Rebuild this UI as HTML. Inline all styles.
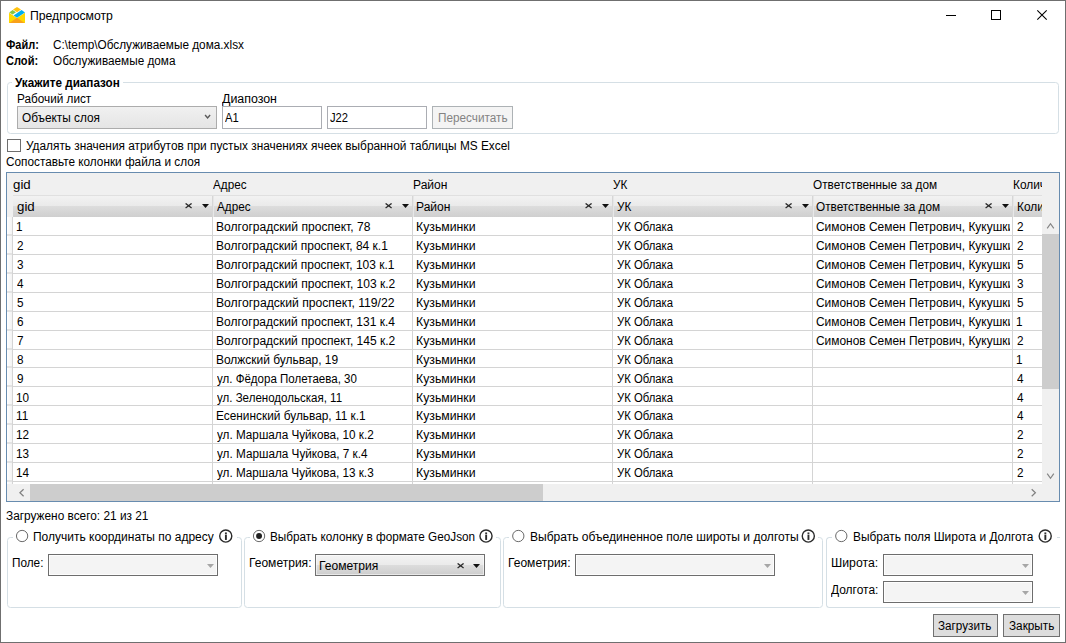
<!DOCTYPE html>
<html lang="ru"><head><meta charset="utf-8"><title>Предпросмотр</title>
<style>
html,body{margin:0;padding:0}
body{width:1066px;height:643px;position:relative;overflow:hidden;background:#fff;font-family:"Liberation Sans",sans-serif;font-size:12px;color:#000}
.a{position:absolute}
.t{position:absolute;white-space:pre;line-height:16px;height:16px;transform-origin:0 0}
.b{font-weight:bold}
.gb{position:absolute;border:1px solid #d5dfe5;border-radius:3.5px;box-sizing:border-box}
.lg{position:absolute;background:#fff;height:3px}
.cmbd{position:absolute;box-sizing:border-box;border:1px solid #6d6d6d;background:#f4f4f4;box-shadow:inset 0 0 0 1px #fdfdfd}
.cmbh{position:absolute;box-sizing:border-box;background:linear-gradient(#f2f2f2 0,#eaeaea 10px,#dddddd 10px,#cfcfcf 100%)}
.btn{position:absolute;box-sizing:border-box;border:1px solid #707070;background:#dddddd}
.hl{position:absolute;height:1px;background:#d4d4d4}
.vl{position:absolute;width:1px;background:#d4d4d4}
</style></head>
<body>
<div class="a" style="left:0;top:0;width:1066px;height:643px;box-sizing:border-box;border:1px solid #6f6f6f;border-right:none;border-bottom:none"></div>
<div class="a" style="left:1065px;top:0;width:1px;height:643px;background:#6f6f6f"></div>
<div class="a" style="left:0;top:642px;width:1066px;height:1px;background:#6f6f6f"></div>
<svg class="a" style="left:9px;top:7px" width="16" height="16" viewBox="0 0 16 16">
<path d="M0 5.8 L8 11 L16 5.8 L16 16 L0 16 Z" fill="#ffd800"/>
<path d="M0.3 16 L8 10.8 L15.7 16 Z" fill="#f9a11b"/>
<path d="M8 0 L12 2.6 L8 5.2 L4 2.6 Z" fill="#ffc20e"/>
<path d="M3.6 2.9 L7 5.2 L3.6 7.6 L0.2 5.4 Z" fill="#8cc63f"/>
<path d="M12.6 2.9 L16 5.4 L8 10.8 L4.6 8.4 Z" fill="#00aeef"/>
</svg>
<svg class="a" style="left:940px;top:5px" width="115" height="20" viewBox="940 5 115 20" shape-rendering="crispEdges">
<rect x="946" y="15" width="10" height="1" fill="#000"/>
<rect x="991.5" y="10.5" width="9" height="9" fill="none" stroke="#000" stroke-width="1"/>
<g shape-rendering="auto"><path d="M1037.3 10.3 L1046.7 19.7 M1046.7 10.3 L1037.3 19.7" stroke="#000" stroke-width="1.1" fill="none"/></g>
</svg>
<div class="gb" style="left:7px;top:82px;width:1052px;height:52px"></div>
<div class="lg" style="left:12px;top:81px;width:111px"></div>
<div class="a" style="left:17px;top:106px;width:200px;height:23px;box-sizing:border-box;border:1px solid #acacac;background:linear-gradient(#f0f0f0,#e5e5e5)"></div>
<svg class="a" style="left:203px;top:113px" width="9" height="8" viewBox="0 0 9 8"><path d="M2.1 2 L4.6 5 L7.1 2" stroke="#5a5a5a" stroke-width="1.4" fill="none"/></svg>
<div class="a" style="left:222px;top:106px;width:100px;height:23px;box-sizing:border-box;border:1px solid #abadb3;background:#fff"></div>
<div class="a" style="left:327px;top:106px;width:100px;height:23px;box-sizing:border-box;border:1px solid #abadb3;background:#fff"></div>
<div class="a" style="left:432px;top:106px;width:81px;height:23px;box-sizing:border-box;border:1px solid #adb2b5;background:#f4f4f4"></div>
<div class="a" style="left:7px;top:139px;width:14px;height:13px;box-sizing:border-box;border:1px solid #6e6e6e;background:#fff"></div>
<div class="a" style="left:6px;top:172px;width:1054px;height:330px;box-sizing:border-box;border:1px solid #688caf;background:#fff"></div>
<div class="a" style="left:7px;top:173px;width:1035px;height:44px;background:#f0f0f0"></div>
<div class="a" style="left:1042px;top:173px;width:17px;height:328px;background:#f0f0f0"></div>
<div class="a" style="left:7px;top:173px;width:1035px;height:311px;overflow:hidden">
<div class="a" style="left:0;top:44px;width:1035px;height:300px;background:#fff"></div>
<div class="cmbh" style="left:6px;top:23px;width:199px;height:21px"></div>
<div class="a" style="left:205px;top:22px;width:2px;height:22px;background:linear-gradient(90deg,#d6d6d6 50%,#e6e6e6 50%)"></div>
<svg class="a" style="left:178px;top:30px" width="8" height="6" viewBox="0 0 8 6"><path d="M0.6 0.4 L6.6 5 M6.6 0.4 L0.6 5" stroke="#2a2a2a" stroke-width="1.25"/></svg>
<svg class="a" style="left:195px;top:31px" width="7" height="4" viewBox="0 0 7 4"><path d="M0 0 L7 0 L3.5 4 Z" fill="#111"/></svg>
<div class="cmbh" style="left:207px;top:23px;width:198px;height:21px"></div>
<div class="a" style="left:405px;top:22px;width:2px;height:22px;background:linear-gradient(90deg,#d6d6d6 50%,#e6e6e6 50%)"></div>
<svg class="a" style="left:378px;top:30px" width="8" height="6" viewBox="0 0 8 6"><path d="M0.6 0.4 L6.6 5 M6.6 0.4 L0.6 5" stroke="#2a2a2a" stroke-width="1.25"/></svg>
<svg class="a" style="left:395px;top:31px" width="7" height="4" viewBox="0 0 7 4"><path d="M0 0 L7 0 L3.5 4 Z" fill="#111"/></svg>
<div class="cmbh" style="left:407px;top:23px;width:198px;height:21px"></div>
<div class="a" style="left:605px;top:22px;width:2px;height:22px;background:linear-gradient(90deg,#d6d6d6 50%,#e6e6e6 50%)"></div>
<svg class="a" style="left:578px;top:30px" width="8" height="6" viewBox="0 0 8 6"><path d="M0.6 0.4 L6.6 5 M6.6 0.4 L0.6 5" stroke="#2a2a2a" stroke-width="1.25"/></svg>
<svg class="a" style="left:595px;top:31px" width="7" height="4" viewBox="0 0 7 4"><path d="M0 0 L7 0 L3.5 4 Z" fill="#111"/></svg>
<div class="cmbh" style="left:607px;top:23px;width:198px;height:21px"></div>
<div class="a" style="left:805px;top:22px;width:2px;height:22px;background:linear-gradient(90deg,#d6d6d6 50%,#e6e6e6 50%)"></div>
<svg class="a" style="left:778px;top:30px" width="8" height="6" viewBox="0 0 8 6"><path d="M0.6 0.4 L6.6 5 M6.6 0.4 L0.6 5" stroke="#2a2a2a" stroke-width="1.25"/></svg>
<svg class="a" style="left:795px;top:31px" width="7" height="4" viewBox="0 0 7 4"><path d="M0 0 L7 0 L3.5 4 Z" fill="#111"/></svg>
<div class="cmbh" style="left:807px;top:23px;width:198px;height:21px"></div>
<div class="a" style="left:1005px;top:22px;width:2px;height:22px;background:linear-gradient(90deg,#d6d6d6 50%,#e6e6e6 50%)"></div>
<svg class="a" style="left:978px;top:30px" width="8" height="6" viewBox="0 0 8 6"><path d="M0.6 0.4 L6.6 5 M6.6 0.4 L0.6 5" stroke="#2a2a2a" stroke-width="1.25"/></svg>
<svg class="a" style="left:995px;top:31px" width="7" height="4" viewBox="0 0 7 4"><path d="M0 0 L7 0 L3.5 4 Z" fill="#111"/></svg>
<div class="cmbh" style="left:1007px;top:23px;width:198px;height:21px"></div>
<div class="a" style="left:1205px;top:22px;width:2px;height:22px;background:linear-gradient(90deg,#d6d6d6 50%,#e6e6e6 50%)"></div>
<svg class="a" style="left:1178px;top:30px" width="8" height="6" viewBox="0 0 8 6"><path d="M0.6 0.4 L6.6 5 M6.6 0.4 L0.6 5" stroke="#2a2a2a" stroke-width="1.25"/></svg>
<svg class="a" style="left:1195px;top:31px" width="7" height="4" viewBox="0 0 7 4"><path d="M0 0 L7 0 L3.5 4 Z" fill="#111"/></svg>
<div class="a" style="left:6px;top:22px;width:1029px;height:1px;background:#e0e0e0"></div>
<div class="hl" style="left:0;top:62px;width:1035px"></div>
<div class="hl" style="left:0;top:81px;width:1035px"></div>
<div class="hl" style="left:0;top:100px;width:1035px"></div>
<div class="hl" style="left:0;top:119px;width:1035px"></div>
<div class="hl" style="left:0;top:138px;width:1035px"></div>
<div class="hl" style="left:0;top:157px;width:1035px"></div>
<div class="hl" style="left:0;top:176px;width:1035px"></div>
<div class="hl" style="left:0;top:194px;width:1035px"></div>
<div class="hl" style="left:0;top:213px;width:1035px"></div>
<div class="hl" style="left:0;top:232px;width:1035px"></div>
<div class="hl" style="left:0;top:251px;width:1035px"></div>
<div class="hl" style="left:0;top:270px;width:1035px"></div>
<div class="hl" style="left:0;top:289px;width:1035px"></div>
<div class="hl" style="left:0;top:308px;width:1035px"></div>
<div class="a" style="left:0;top:44px;width:5px;height:300px;background:linear-gradient(90deg,#fff 0,#f3f3f3 100%)"></div>
<div class="a" style="left:0;top:61px;width:5px;height:2px;background:#e3e3e3"></div>
<div class="a" style="left:0;top:80px;width:5px;height:2px;background:#e3e3e3"></div>
<div class="a" style="left:0;top:99px;width:5px;height:2px;background:#e3e3e3"></div>
<div class="a" style="left:0;top:118px;width:5px;height:2px;background:#e3e3e3"></div>
<div class="a" style="left:0;top:137px;width:5px;height:2px;background:#e3e3e3"></div>
<div class="a" style="left:0;top:156px;width:5px;height:2px;background:#e3e3e3"></div>
<div class="a" style="left:0;top:175px;width:5px;height:2px;background:#e3e3e3"></div>
<div class="a" style="left:0;top:193px;width:5px;height:2px;background:#e3e3e3"></div>
<div class="a" style="left:0;top:212px;width:5px;height:2px;background:#e3e3e3"></div>
<div class="a" style="left:0;top:231px;width:5px;height:2px;background:#e3e3e3"></div>
<div class="a" style="left:0;top:250px;width:5px;height:2px;background:#e3e3e3"></div>
<div class="a" style="left:0;top:269px;width:5px;height:2px;background:#e3e3e3"></div>
<div class="a" style="left:0;top:288px;width:5px;height:2px;background:#e3e3e3"></div>
<div class="a" style="left:0;top:307px;width:5px;height:2px;background:#e3e3e3"></div>
<div class="vl" style="left:5px;top:44px;height:300px"></div>
<div class="vl" style="left:205px;top:44px;height:300px"></div>
<div class="vl" style="left:405px;top:44px;height:300px"></div>
<div class="vl" style="left:605px;top:44px;height:300px"></div>
<div class="vl" style="left:805px;top:44px;height:300px"></div>
<div class="vl" style="left:1005px;top:44px;height:300px"></div>
<span class="t" style="left:6.04px;top:4.00px;transform:scaleX(1.1060)">gid</span>
<span class="t" style="left:9.74px;top:26.00px;transform:scaleX(1.1060)">gid</span>
<span class="t" style="left:206.38px;top:4.00px;transform:scaleX(0.9759)">Адрес</span>
<span class="t" style="left:210.08px;top:26.00px;transform:scaleX(0.9759)">Адрес</span>
<span class="t" style="left:405.61px;top:4.00px;transform:scaleX(1.0037)">Район</span>
<span class="t" style="left:409.31px;top:26.00px;transform:scaleX(1.0037)">Район</span>
<span class="t" style="left:606.09px;top:4.00px;transform:scaleX(0.9770)">УК</span>
<span class="t" style="left:609.79px;top:26.00px;transform:scaleX(0.9770)">УК</span>
<span class="t" style="left:805.64px;top:4.00px;transform:scaleX(0.9819)">Ответственные за дом</span>
<span class="t" style="left:809.34px;top:26.00px;transform:scaleX(0.9819)">Ответственные за дом</span>
<span class="t" style="left:1005.83px;top:4.00px;transform:scaleX(0.9884)">Количество</span>
<span class="t" style="left:1009.53px;top:26.00px;transform:scaleX(0.9884)">Количество</span>
<span class="t" style="left:9.41px;top:46.40px;transform:scaleX(0.9770)">1</span>
<span class="t" style="left:208.91px;top:46.40px;transform:scaleX(1.0059)">Волгоградский проспект, 78</span>
<span class="t" style="left:409.29px;top:46.40px;transform:scaleX(1.0219)">Кузьминки</span>
<span class="t" style="left:609.80px;top:46.40px;transform:scaleX(0.9415)">УК Облака</span>
<span class="t" style="left:808.69px;top:46.40px;transform:scaleX(0.9944);width:195.0px;overflow:hidden">Симонов Семен Петрович, Кукушкин</span>
<span class="t" style="left:1009.51px;top:46.40px;transform:scaleX(0.9770)">2</span>
<span class="t" style="left:9.71px;top:65.30px;transform:scaleX(0.9770)">2</span>
<span class="t" style="left:208.92px;top:65.30px;transform:scaleX(0.9986)">Волгоградский проспект, 84 к.1</span>
<span class="t" style="left:409.29px;top:65.30px;transform:scaleX(1.0219)">Кузьминки</span>
<span class="t" style="left:609.80px;top:65.30px;transform:scaleX(0.9415)">УК Облака</span>
<span class="t" style="left:808.69px;top:65.30px;transform:scaleX(0.9944);width:195.0px;overflow:hidden">Симонов Семен Петрович, Кукушкин</span>
<span class="t" style="left:1009.51px;top:65.30px;transform:scaleX(0.9770)">2</span>
<span class="t" style="left:9.85px;top:84.20px;transform:scaleX(0.9770)">3</span>
<span class="t" style="left:208.92px;top:84.20px;transform:scaleX(0.9982)">Волгоградский проспект, 103 к.1</span>
<span class="t" style="left:409.29px;top:84.20px;transform:scaleX(1.0219)">Кузьминки</span>
<span class="t" style="left:609.80px;top:84.20px;transform:scaleX(0.9415)">УК Облака</span>
<span class="t" style="left:808.69px;top:84.20px;transform:scaleX(0.9944);width:195.0px;overflow:hidden">Симонов Семен Петрович, Кукушкин</span>
<span class="t" style="left:1009.63px;top:84.20px;transform:scaleX(0.9770)">5</span>
<span class="t" style="left:10.03px;top:103.10px;transform:scaleX(0.9770)">4</span>
<span class="t" style="left:208.91px;top:103.10px;transform:scaleX(1.0029)">Волгоградский проспект, 103 к.2</span>
<span class="t" style="left:409.29px;top:103.10px;transform:scaleX(1.0219)">Кузьминки</span>
<span class="t" style="left:609.80px;top:103.10px;transform:scaleX(0.9415)">УК Облака</span>
<span class="t" style="left:808.69px;top:103.10px;transform:scaleX(0.9944);width:195.0px;overflow:hidden">Симонов Семен Петрович, Кукушкин</span>
<span class="t" style="left:1009.65px;top:103.10px;transform:scaleX(0.9770)">3</span>
<span class="t" style="left:9.83px;top:122.00px;transform:scaleX(0.9770)">5</span>
<span class="t" style="left:208.90px;top:122.00px;transform:scaleX(1.0144)">Волгоградский проспект, 119/22</span>
<span class="t" style="left:409.29px;top:122.00px;transform:scaleX(1.0219)">Кузьминки</span>
<span class="t" style="left:609.80px;top:122.00px;transform:scaleX(0.9415)">УК Облака</span>
<span class="t" style="left:808.69px;top:122.00px;transform:scaleX(0.9944);width:195.0px;overflow:hidden">Симонов Семен Петрович, Кукушкин</span>
<span class="t" style="left:1009.63px;top:122.00px;transform:scaleX(0.9770)">5</span>
<span class="t" style="left:9.70px;top:140.90px;transform:scaleX(0.9770)">6</span>
<span class="t" style="left:208.91px;top:140.90px;transform:scaleX(1.0014)">Волгоградский проспект, 131 к.4</span>
<span class="t" style="left:409.29px;top:140.90px;transform:scaleX(1.0219)">Кузьминки</span>
<span class="t" style="left:609.80px;top:140.90px;transform:scaleX(0.9415)">УК Облака</span>
<span class="t" style="left:808.69px;top:140.90px;transform:scaleX(0.9944);width:195.0px;overflow:hidden">Симонов Семен Петрович, Кукушкин</span>
<span class="t" style="left:1009.21px;top:140.90px;transform:scaleX(0.9770)">1</span>
<span class="t" style="left:9.70px;top:159.80px;transform:scaleX(0.9770)">7</span>
<span class="t" style="left:208.91px;top:159.80px;transform:scaleX(1.0029)">Волгоградский проспект, 145 к.2</span>
<span class="t" style="left:409.29px;top:159.80px;transform:scaleX(1.0219)">Кузьминки</span>
<span class="t" style="left:609.80px;top:159.80px;transform:scaleX(0.9415)">УК Облака</span>
<span class="t" style="left:808.69px;top:159.80px;transform:scaleX(0.9944);width:195.0px;overflow:hidden">Симонов Семен Петрович, Кукушкин</span>
<span class="t" style="left:1009.51px;top:159.80px;transform:scaleX(0.9770)">2</span>
<span class="t" style="left:9.79px;top:178.70px;transform:scaleX(0.9770)">8</span>
<span class="t" style="left:208.92px;top:178.70px;transform:scaleX(0.9960)">Волжский бульвар, 19</span>
<span class="t" style="left:409.29px;top:178.70px;transform:scaleX(1.0219)">Кузьминки</span>
<span class="t" style="left:609.80px;top:178.70px;transform:scaleX(0.9415)">УК Облака</span>
<span class="t" style="left:1009.21px;top:178.70px;transform:scaleX(0.9770)">1</span>
<span class="t" style="left:9.75px;top:197.60px;transform:scaleX(0.9770)">9</span>
<span class="t" style="left:209.87px;top:197.60px;transform:scaleX(0.9613)">ул. Фёдора Полетаева, 30</span>
<span class="t" style="left:409.29px;top:197.60px;transform:scaleX(1.0219)">Кузьминки</span>
<span class="t" style="left:609.80px;top:197.60px;transform:scaleX(0.9415)">УК Облака</span>
<span class="t" style="left:1009.83px;top:197.60px;transform:scaleX(0.9770)">4</span>
<span class="t" style="left:9.41px;top:216.50px;transform:scaleX(0.9770)">10</span>
<span class="t" style="left:209.87px;top:216.50px;transform:scaleX(0.9613)">ул. Зеленодольская, 11</span>
<span class="t" style="left:409.29px;top:216.50px;transform:scaleX(1.0219)">Кузьминки</span>
<span class="t" style="left:609.80px;top:216.50px;transform:scaleX(0.9415)">УК Облака</span>
<span class="t" style="left:1009.83px;top:216.50px;transform:scaleX(0.9770)">4</span>
<span class="t" style="left:9.41px;top:235.40px;transform:scaleX(0.9770)">11</span>
<span class="t" style="left:208.93px;top:235.40px;transform:scaleX(0.9884)">Есенинский бульвар, 11 к.1</span>
<span class="t" style="left:409.29px;top:235.40px;transform:scaleX(1.0219)">Кузьминки</span>
<span class="t" style="left:609.80px;top:235.40px;transform:scaleX(0.9415)">УК Облака</span>
<span class="t" style="left:1009.83px;top:235.40px;transform:scaleX(0.9770)">4</span>
<span class="t" style="left:9.41px;top:254.30px;transform:scaleX(0.9770)">12</span>
<span class="t" style="left:209.87px;top:254.30px;transform:scaleX(0.9765)">ул. Маршала Чуйкова, 10 к.2</span>
<span class="t" style="left:409.29px;top:254.30px;transform:scaleX(1.0219)">Кузьминки</span>
<span class="t" style="left:609.80px;top:254.30px;transform:scaleX(0.9415)">УК Облака</span>
<span class="t" style="left:1009.51px;top:254.30px;transform:scaleX(0.9770)">2</span>
<span class="t" style="left:9.41px;top:273.20px;transform:scaleX(0.9770)">13</span>
<span class="t" style="left:209.87px;top:273.20px;transform:scaleX(0.9789)">ул. Маршала Чуйкова, 7 к.4</span>
<span class="t" style="left:409.29px;top:273.20px;transform:scaleX(1.0219)">Кузьминки</span>
<span class="t" style="left:609.80px;top:273.20px;transform:scaleX(0.9415)">УК Облака</span>
<span class="t" style="left:1009.51px;top:273.20px;transform:scaleX(0.9770)">2</span>
<span class="t" style="left:9.41px;top:292.10px;transform:scaleX(0.9770)">14</span>
<span class="t" style="left:209.87px;top:292.10px;transform:scaleX(0.9761)">ул. Маршала Чуйкова, 13 к.3</span>
<span class="t" style="left:409.29px;top:292.10px;transform:scaleX(1.0219)">Кузьминки</span>
<span class="t" style="left:609.80px;top:292.10px;transform:scaleX(0.9415)">УК Облака</span>
<span class="t" style="left:1009.51px;top:292.10px;transform:scaleX(0.9770)">2</span>
</div>
<div class="a" style="left:7px;top:484px;width:1052px;height:17px;background:#f0f0f0"></div>
<div class="a" style="left:30px;top:484px;width:513px;height:17px;background:#cdcdcd"></div>
<svg class="a" style="left:17px;top:488px" width="9" height="10" viewBox="0 0 9 10"><path d="M6.6 1.2 L2.9 4.7 L6.6 8.2" stroke="#808080" stroke-width="1.2" fill="none"/></svg>
<svg class="a" style="left:1029px;top:488px" width="9" height="10" viewBox="0 0 9 10"><path d="M2.7 1.2 L6.4 4.7 L2.7 8.2" stroke="#808080" stroke-width="1.2" fill="none"/></svg>
<div class="a" style="left:1042px;top:234px;width:17px;height:155px;background:#cdcdcd"></div>
<svg class="a" style="left:1046px;top:221px" width="10" height="9" viewBox="0 0 10 9"><path d="M1.2 7.4 L4.5 2.7 L7.8 7.4" stroke="#858585" stroke-width="1.2" fill="none"/></svg>
<svg class="a" style="left:1046px;top:471px" width="10" height="9" viewBox="0 0 10 9"><path d="M1.2 2.6 L4.5 7.3 L7.8 2.6" stroke="#858585" stroke-width="1.2" fill="none"/></svg>
<div class="gb" style="left:7px;top:537px;width:235px;height:71px"></div>
<div class="lg" style="left:13px;top:536px;width:224px"></div>
<svg class="a" style="left:14px;top:528px" width="16" height="16" viewBox="0 0 16 16"><circle cx="8.10" cy="8.00" r="5.65" fill="#fff" stroke="#6a6a6a" stroke-width="1"/></svg>
<svg class="a" style="left:217px;top:528px" width="16" height="16" viewBox="0 0 16 16"><circle cx="8.75" cy="8.05" r="6.05" fill="#fff" stroke="#2b2b2b" stroke-width="1.4"/><rect x="7.95" y="6.55" width="1.9" height="5.4" fill="#2b2b2b"/><rect x="7.95" y="4.45" width="1.9" height="1.5" fill="#2b2b2b"/></svg>
<div class="cmbd" style="left:48px;top:554px;width:170px;height:22px"></div>
<svg class="a" style="left:207px;top:564px" width="7" height="4" viewBox="0 0 7 4"><path d="M0 0 L7 0 L3.5 4 Z" fill="#a6a6a6"/></svg>
<div class="gb" style="left:244px;top:537px;width:257px;height:71px"></div>
<div class="lg" style="left:250px;top:536px;width:246px"></div>
<svg class="a" style="left:251px;top:528px" width="16" height="16" viewBox="0 0 16 16"><circle cx="8.05" cy="8.00" r="5.65" fill="#fff" stroke="#6a6a6a" stroke-width="1"/><circle cx="8.05" cy="8.00" r="2.95" fill="#212121"/></svg>
<svg class="a" style="left:478px;top:528px" width="16" height="16" viewBox="0 0 16 16"><circle cx="8.00" cy="8.05" r="6.05" fill="#fff" stroke="#2b2b2b" stroke-width="1.4"/><rect x="7.20" y="6.55" width="1.9" height="5.4" fill="#2b2b2b"/><rect x="7.20" y="4.45" width="1.9" height="1.5" fill="#2b2b2b"/></svg>
<div class="a" style="left:315px;top:554px;width:170px;height:22px;box-sizing:border-box;border:1px solid #707070;background:linear-gradient(#f3f3f3 0,#ebebeb 50%,#dddddd 50%,#cdcdcd 100%);box-shadow:inset 0 0 0 1px rgba(255,255,255,.55)"></div>
<svg class="a" style="left:456.7px;top:562.6999999999999px" width="8" height="6" viewBox="0 0 8 6"><path d="M0.6 0.4 L6.6 5 M6.6 0.4 L0.6 5" stroke="#2a2a2a" stroke-width="1.25"/></svg>
<svg class="a" style="left:473.0px;top:564px" width="7" height="4" viewBox="0 0 7 4"><path d="M0 0 L7 0 L3.5 4 Z" fill="#111"/></svg>
<div class="gb" style="left:503px;top:537px;width:320px;height:71px"></div>
<div class="lg" style="left:509px;top:536px;width:309px"></div>
<svg class="a" style="left:510px;top:528px" width="16" height="16" viewBox="0 0 16 16"><circle cx="8.30" cy="8.00" r="5.65" fill="#fff" stroke="#6a6a6a" stroke-width="1"/></svg>
<svg class="a" style="left:800px;top:528px" width="16" height="16" viewBox="0 0 16 16"><circle cx="8.30" cy="8.05" r="6.05" fill="#fff" stroke="#2b2b2b" stroke-width="1.4"/><rect x="7.50" y="6.55" width="1.9" height="5.4" fill="#2b2b2b"/><rect x="7.50" y="4.45" width="1.9" height="1.5" fill="#2b2b2b"/></svg>
<div class="cmbd" style="left:575px;top:554px;width:200px;height:22px"></div>
<svg class="a" style="left:764px;top:564px" width="7" height="4" viewBox="0 0 7 4"><path d="M0 0 L7 0 L3.5 4 Z" fill="#a6a6a6"/></svg>
<div class="gb" style="left:826px;top:537px;width:234px;height:71px;border-right:none;border-top-right-radius:0;border-bottom-right-radius:0"></div>
<div class="lg" style="left:832px;top:536px;width:225px"></div>
<svg class="a" style="left:833px;top:528px" width="16" height="16" viewBox="0 0 16 16"><circle cx="8.30" cy="8.00" r="5.65" fill="#fff" stroke="#6a6a6a" stroke-width="1"/></svg>
<svg class="a" style="left:1037px;top:528px" width="16" height="16" viewBox="0 0 16 16"><circle cx="8.20" cy="8.05" r="6.05" fill="#fff" stroke="#2b2b2b" stroke-width="1.4"/><rect x="7.40" y="6.55" width="1.9" height="5.4" fill="#2b2b2b"/><rect x="7.40" y="4.45" width="1.9" height="1.5" fill="#2b2b2b"/></svg>
<div class="cmbd" style="left:883px;top:554px;width:150px;height:22px"></div>
<svg class="a" style="left:1022px;top:564px" width="7" height="4" viewBox="0 0 7 4"><path d="M0 0 L7 0 L3.5 4 Z" fill="#a6a6a6"/></svg>
<div class="cmbd" style="left:883px;top:581px;width:150px;height:22px"></div>
<svg class="a" style="left:1022px;top:591px" width="7" height="4" viewBox="0 0 7 4"><path d="M0 0 L7 0 L3.5 4 Z" fill="#a6a6a6"/></svg>
<div class="btn" style="left:933px;top:614px;width:65px;height:23px"></div>
<div class="btn" style="left:1003px;top:614px;width:57px;height:23px"></div>
<span class="t" style="left:30.01px;top:8.00px;transform:scaleX(1.0186)">Предпросмотр</span>
<span class="t b" style="left:6.22px;top:37.00px;transform:scaleX(0.9141)">Файл:</span>
<span class="t" style="left:53.10px;top:37.00px;transform:scaleX(0.9823)">C:\temp\Обслуживаемые дома.xlsx</span>
<span class="t b" style="left:6.15px;top:53.00px;transform:scaleX(0.9218)">Слой:</span>
<span class="t" style="left:53.14px;top:53.00px;transform:scaleX(0.9795)">Обслуживаемые дома</span>
<span class="t b" style="left:14.99px;top:75.00px;transform:scaleX(0.9757)">Укажите диапазон</span>
<span class="t" style="left:16.74px;top:91.00px;transform:scaleX(0.9802)">Рабочий лист</span>
<span class="t" style="left:222.21px;top:91.00px;transform:scaleX(1.0325)">Диапозон</span>
<span class="t" style="left:22.44px;top:110.00px;transform:scaleX(0.9853)">Объекты слоя</span>
<span class="t" style="left:225.18px;top:110.00px;transform:scaleX(0.9376)">A1</span>
<span class="t" style="left:330.03px;top:110.00px;transform:scaleX(0.9317)">J22</span>
<span class="t" style="left:438.35px;top:110.00px;transform:scaleX(0.9794);color:#838383">Пересчитать</span>
<span class="t" style="left:25.68px;top:138.00px;transform:scaleX(0.9869)">Удалять значения атрибутов при пустых значениях ячеек выбранной таблицы MS Excel</span>
<span class="t" style="left:5.60px;top:154.00px;transform:scaleX(0.9817)">Сопоставьте колонки файла и слоя</span>
<span class="t" style="left:5.81px;top:508.00px;transform:scaleX(0.9876)">Загружено всего: 21 из 21</span>
<span class="t" style="left:33.43px;top:529.00px;transform:scaleX(0.9987)">Получить координаты по адресу</span>
<span class="t" style="left:12.05px;top:555.00px;transform:scaleX(0.9807)">Поле:</span>
<span class="t" style="left:270.24px;top:529.00px;transform:scaleX(0.9786)">Выбрать колонку в формате GeoJson</span>
<span class="t" style="left:248.51px;top:555.00px;transform:scaleX(1.0033)">Геометрия:</span>
<span class="t" style="left:318.81px;top:558.00px;transform:scaleX(1.0064)">Геометрия</span>
<span class="t" style="left:530.01px;top:529.00px;transform:scaleX(1.0040)">Выбрать объединенное поле широты и долготы</span>
<span class="t" style="left:508.31px;top:555.00px;transform:scaleX(1.0033)">Геометрия:</span>
<span class="t" style="left:853.22px;top:529.00px;transform:scaleX(0.9914)">Выбрать поля Широта и Долгота</span>
<span class="t" style="left:830.99px;top:555.00px;transform:scaleX(1.0210)">Широта:</span>
<span class="t" style="left:831.41px;top:582.00px;transform:scaleX(0.9958)">Долгота:</span>
<span class="t" style="left:938.32px;top:618.00px;transform:scaleX(0.9757)">Загрузить</span>
<span class="t" style="left:1008.62px;top:618.00px;transform:scaleX(0.9794)">Закрыть</span>
</body></html>
